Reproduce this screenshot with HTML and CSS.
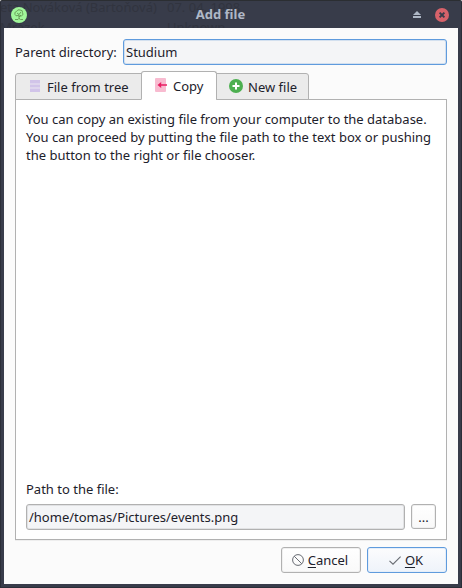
FILE: index.html
```
<!DOCTYPE html>
<html lang="en">
<head>
<meta charset="utf-8">
<title>Add file</title>
<link rel="stylesheet" href="styles.css">
</head>
<body>
<div class="window">
  <header class="titlebar">
    <div class="behind" aria-hidden="true">
      <span class="behind-name">eta Nováková (Bartoňová)</span><span class="behind-date">07. 04. 1998</span>
      <span class="behind-name second">Mrázek</span><span class="behind-date second">Unknown</span>
    </div>
    <svg class="app-icon" width="16" height="16" viewBox="0 0 16 16"><circle cx="8" cy="8" r="8" fill="#a0f69a"/><path d="M4 7.5Q3 5 5.5 4.5Q6.5 2 9 3Q12 3 11.5 5.5Q13 8 10.5 8.8Q8.5 10 7 8.5Q4.5 9.5 4 7.5M6 6L8 7.5L10 5M8 7.5V12M8 10L10 8M4 12.5H7L8 11.5L9.5 12.5H12" fill="none" stroke="#649653" stroke-width=".9"/></svg>
    <h1 class="title">Add file</h1>
    <svg class="shade-icon" width="8" height="7" viewBox="0 0 8 7"><path d="M4 0L8 4H0ZM0 5H8V7H0Z" fill="#afb8c6"/></svg>
    <svg class="close-icon" width="14" height="14" viewBox="0 0 14 14"><circle cx="7" cy="7" r="7" fill="#d7626a"/><path d="M4.6 4.6L9.4 9.4M9.4 4.6L4.6 9.4" stroke="#383c4a" stroke-width="2"/></svg>
  </header>
  <main class="content">
    <div class="parent-row">
      <span class="parent-label">Parent directory:</span>
      <div class="field focused">Studium</div>
    </div>
    <div class="tabs">
      <div class="tab tree">
        <svg width="12" height="12" viewBox="0 0 12 12"><path d="M1 0H11V3H1ZM1 4.5H11V7.5H1ZM1 9H11V12H1Z" fill="#d1c4e9"/><path d="M1 3.75H11M1 8.25H11" stroke="#ded5ee" stroke-width="1.5"/></svg>
        <span>File from tree</span>
      </div>
      <div class="tab active">
        <svg width="13" height="14" viewBox="0 0 13 14"><rect width="11" height="14" rx="1" fill="#f8bbd0"/><path d="M2.5 7L6.2 4V6.2H12V7.8H6.2V10Z" fill="#e91e63"/></svg>
        <span>Copy</span>
      </div>
      <div class="tab new">
        <svg width="14" height="14" viewBox="0 0 14 14"><circle cx="7" cy="7" r="7" fill="#4caf50"/><path d="M7 3.5V10.5M3.5 7H10.5" stroke="#fff" stroke-width="2"/></svg>
        <span>New file</span>
      </div>
    </div>
    <section class="panel">
      <p class="help">You can copy an existing file from your computer to the database.<br>You can proceed by putting the file path to the text box or pushing<br>the button to the right or file chooser.</p>
      <div class="path-label">Path to the file:</div>
      <div class="path-row">
        <div class="field">/home/tomas/Pictures/events.png</div>
        <div class="button browse">...</div>
      </div>
    </section>
    <footer class="actions">
      <div class="button action">
        <svg width="12" height="12" viewBox="0 0 12 12"><circle cx="6" cy="6" r="5.4" fill="none" stroke="#686c73"/><path d="M2.2 2.2L9.8 9.8" stroke="#686c73"/></svg>
        <span><span class="key">C</span>ancel</span>
      </div>
      <div class="button action default">
        <svg width="12" height="9" viewBox="0 0 12 9"><path d="M.5 4.8L4 8.2L11.6 .6" fill="none" stroke="#686c73" stroke-width="1.1"/></svg>
        <span><span class="key">O</span>K</span>
      </div>
    </footer>
  </main>
</div>
</body>
</html>
```
FILE: styles.css
```
* { box-sizing: border-box; }
body { margin: 0; font: 13px/18px "Noto Sans", sans-serif; color: #1d212b; }
.window {
  width: 462px; height: 588px; padding: 0 3px 3px; overflow: hidden;
  display: flex; flex-direction: column;
  background: #383c4a; border: 1px solid #2b2e38; border-top-color: #2b2e32;
  border-radius: 2px 2px 0 0;
}
.titlebar {
  position: relative; height: 27px; flex: none; display: flex; align-items: center;
  margin: 0 -3px; padding: 0 12px 0 10px; overflow: hidden;
}
.behind {
  position: absolute; left: -1px; top: -3px; display: grid;
  grid-template-columns: 167px auto; row-gap: 2px; color: #31343f; white-space: nowrap;
}
.app-icon { position: relative; }
.title {
  position: relative; flex: 1; margin: 0; padding: 0 0 2px 1px; text-align: center;
  font-size: 13px; font-weight: 700; line-height: 18px; color: #afb8c6;
}
.shade-icon { margin-right: 14px; }
.content { flex: 1; background: #fbfbfb; padding: 11px; display: flex; flex-direction: column; }
.parent-row { display: flex; align-items: center; }
.parent-label { width: 108px; flex: none; }
.field {
  flex: 1; height: 26px; padding: 3px 2px; background: #f4f5f7; white-space: nowrap;
  border: 1px solid #b1b1b1; border-radius: 3px; box-shadow: inset 0 0 0 1px #e1e2e4;
}
.field.focused { border-color: #5f9bdd; box-shadow: inset 0 0 0 1px #d3e0ef; }
.tabs { position: relative; display: flex; align-items: flex-end; height: 29px; margin-top: 6px; margin-bottom: -1px; }
.tab {
  display: flex; align-items: center; height: 27px; padding-top: 1px;
  background: #ebebeb; border: 1px solid #b1b1b1; border-radius: 3px 3px 0 0;
}
.tab svg { flex: none; }
.tree { width: 127px; padding-left: 13px; gap: 6px; border-top-right-radius: 0; }
.tree svg { margin-top: -2px; }
.active { width: 76px; height: 29px; margin-left: -1px; padding-left: 13px; gap: 5px; background: #fff; border-bottom-color: #fff; }
.active svg { margin-top: -3px; }
.new { width: 93px; margin-left: -1px; padding-left: 12px; gap: 5px; border-top-left-radius: 0; }
.new svg { margin-top: -3px; }
.panel {
  height: 441px; padding: 10px 10px 9px; background: #fff; border: 1px solid #b1b1b1;
  box-shadow: 0 1px #eee; display: flex; flex-direction: column;
}
.help { margin: 0; white-space: nowrap; }
.path-label { margin-top: auto; margin-bottom: 6px; }
.path-row { display: flex; gap: 6px; }
.button {
  display: flex; align-items: center; justify-content: center; gap: 4px;
  width: 80px; height: 26px; border: 1px solid #b1b1b1; border-radius: 3px;
  background: linear-gradient(#fff, #f9f9f9); box-shadow: inset 0 0 0 1px #f0f0f0;
}
.action { padding-right: 2px; }
.browse { width: 25px; height: 25px; }
.default { border-color: #5f9bdd; background: linear-gradient(#fcfcfd, #eef3fa); box-shadow: inset 0 0 0 1px #e5eef9; }
.actions { display: flex; justify-content: flex-end; gap: 6px; margin-top: 7px; }
.key { text-decoration: underline; text-decoration-thickness: 1px; text-underline-offset: 2px; }
```
